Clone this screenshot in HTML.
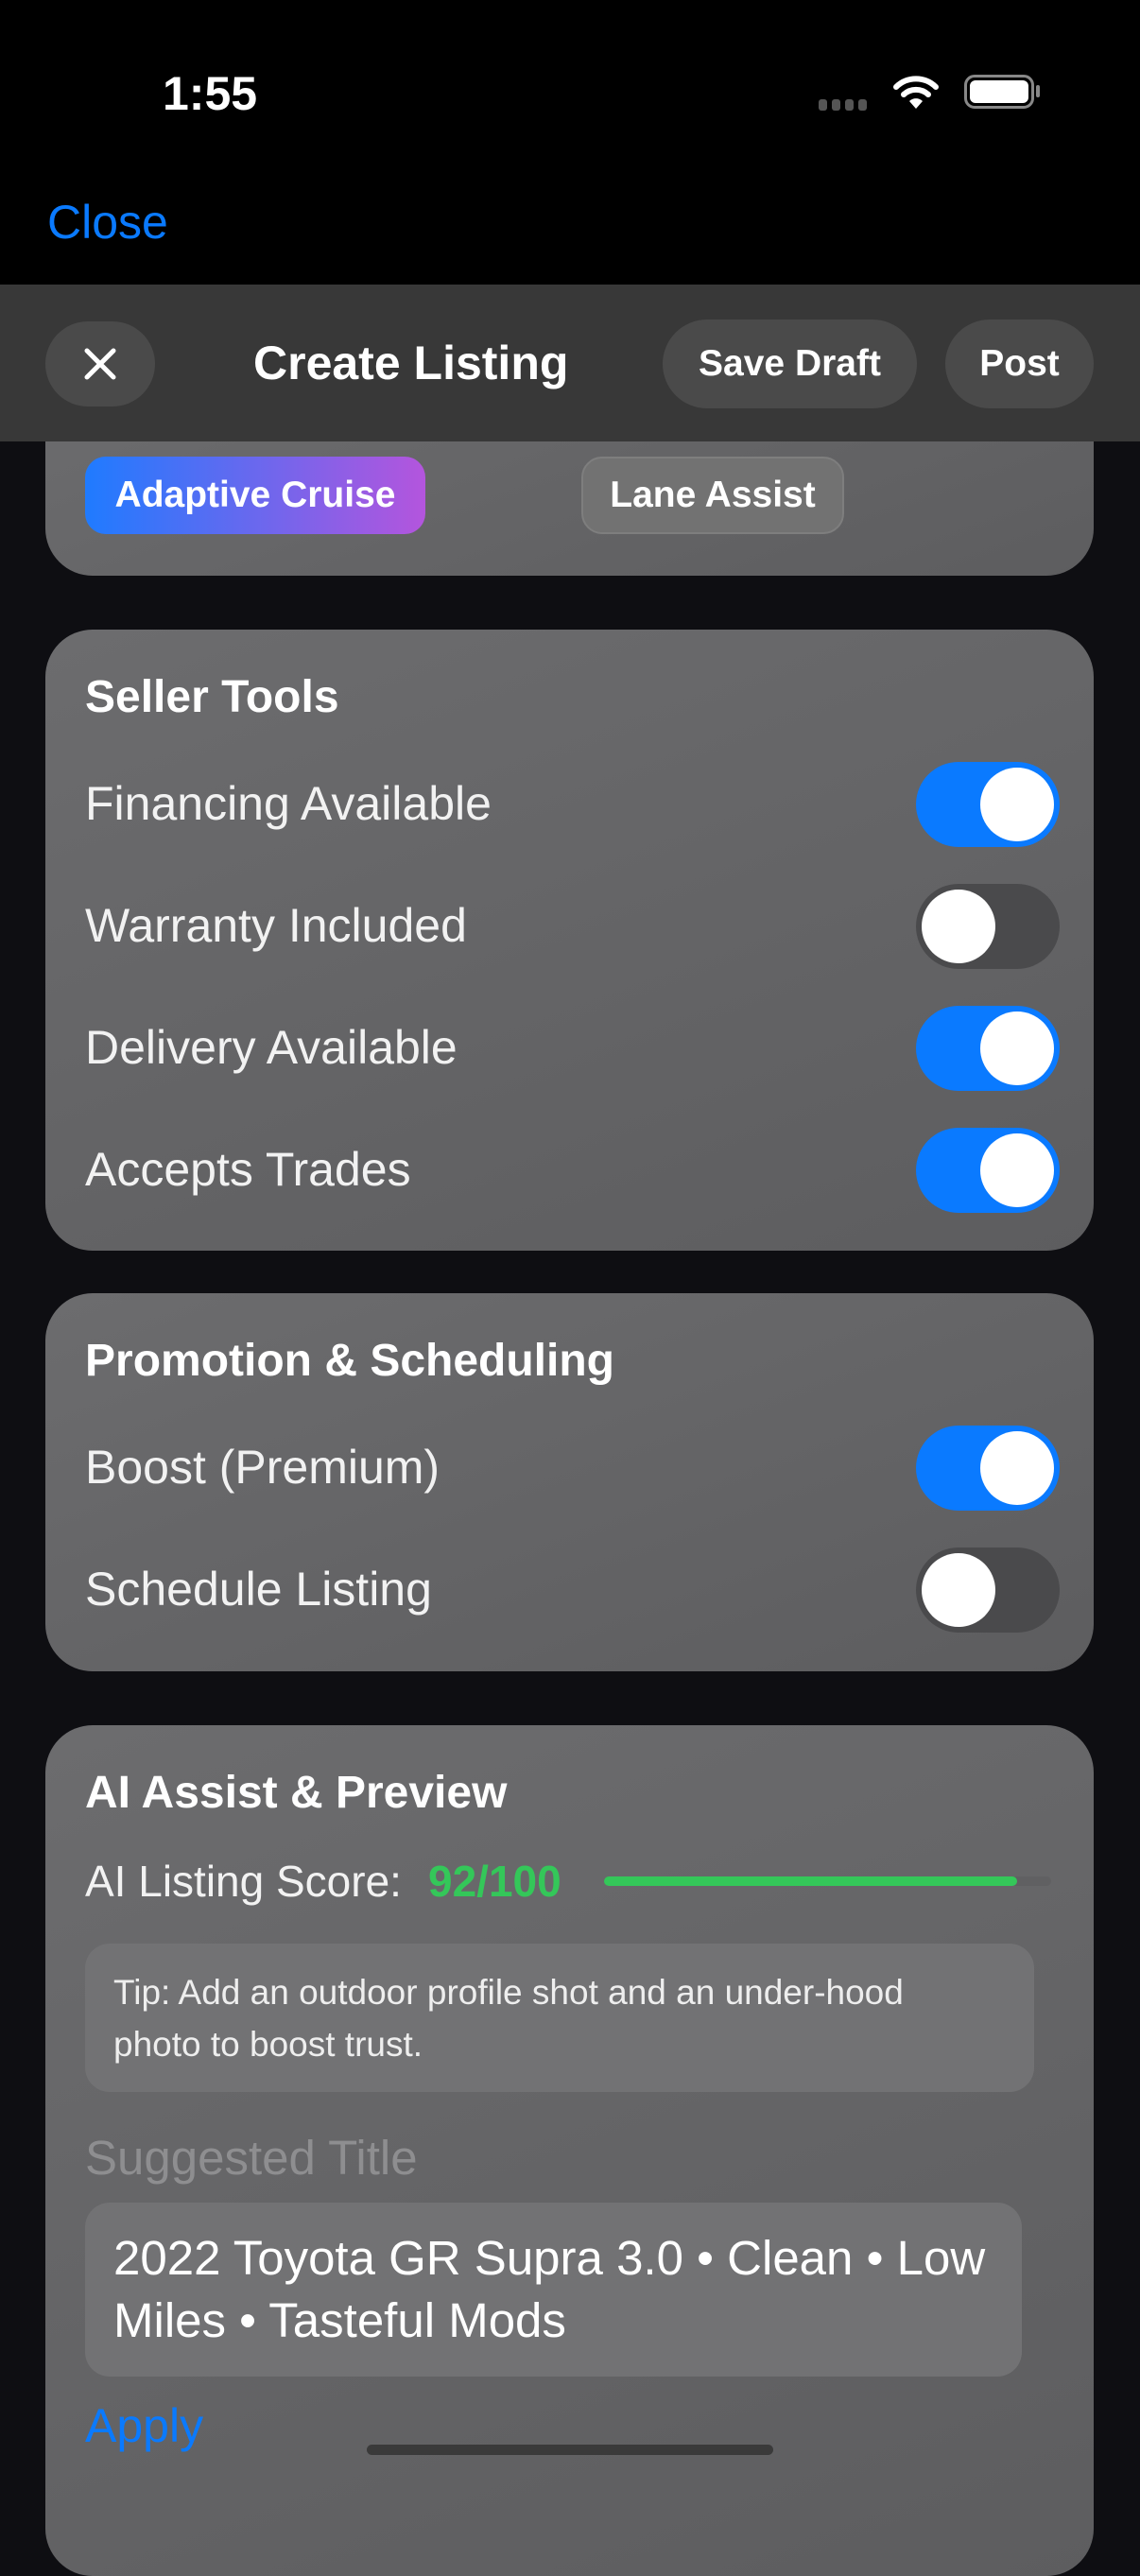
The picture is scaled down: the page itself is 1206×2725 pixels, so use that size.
<!DOCTYPE html>
<html><head><meta charset="utf-8"><style>
*{margin:0;padding:0;box-sizing:border-box}
body{width:1206px;height:2622px;background:#0e0e12;font-family:"Liberation Sans",sans-serif;color:#fff;position:relative;overflow:hidden}
.abs{position:absolute}
.top{left:0;top:0;width:1206px;height:301px;background:#000}
.nav{left:0;top:301px;width:1206px;height:166px;background:#383838;z-index:5}
.pill{position:absolute;background:#4a4a4a;border-radius:50px;display:flex;align-items:center;justify-content:center;font-size:39px;font-weight:bold}
.card{position:absolute;left:48px;width:1109px;background:linear-gradient(160deg,#6c6c6e,#5d5d5f);border-radius:50px}
.h{position:absolute;left:42px;font-size:48px;font-weight:bold}
.row{position:absolute;left:42px;font-size:50px;color:#f2f2f2}
.tg{position:absolute;right:36px;width:152px;height:90px;border-radius:45px;background:#0a7aff}
.tg::after{content:"";position:absolute;top:6px;right:6px;width:78px;height:78px;border-radius:50%;background:#fff}
.tg.off{background:#4a4a4c}
.tg.off::after{right:auto;left:6px}
</style></head><body>
<div class="abs top"></div>
<div class="abs" style="left:172px;top:70px;font-size:50px;font-weight:bold">1:55</div>
<div class="abs" style="left:866px;top:105px;display:flex;gap:5px"><i style="width:9px;height:12px;background:#555;border-radius:3px"></i><i style="width:9px;height:12px;background:#555;border-radius:3px"></i><i style="width:9px;height:12px;background:#555;border-radius:3px"></i><i style="width:9px;height:12px;background:#555;border-radius:3px"></i></div>
<svg class="abs" style="left:944px;top:78px" width="50" height="40" viewBox="0 0 50 40"><path d="M4 14a30 30 0 0 1 42 0" stroke="#fff" stroke-width="6" fill="none" stroke-linecap="round"/><path d="M12 22a19 19 0 0 1 26 0" stroke="#fff" stroke-width="6" fill="none" stroke-linecap="round"/><path d="M18 29l7 8 7-8a10 10 0 0 0-14 0z" fill="#fff"/></svg>
<div class="abs" style="left:1020px;top:79px;width:74px;height:36px;border:3px solid #888;border-radius:11px;padding:3px"><div style="width:100%;height:100%;background:#fff;border-radius:6px"></div></div>
<div class="abs" style="left:1096px;top:90px;width:4px;height:13px;background:#888;border-radius:2px"></div>
<div class="abs" style="left:50px;top:206px;font-size:50px;color:#0a7aff">Close</div>
<div class="abs nav">
<div class="pill" style="left:48px;top:39px;width:116px;height:90px"><svg width="36" height="36" viewBox="0 0 36 36"><path d="M4 4L32 32M32 4L4 32" stroke="#fff" stroke-width="5" stroke-linecap="round"/></svg></div>
<div class="abs" style="left:268px;top:54px;font-size:50px;font-weight:bold">Create Listing</div>
<div class="pill" style="left:701px;top:37px;width:269px;height:94px">Save Draft</div>
<div class="pill" style="left:1000px;top:37px;width:157px;height:94px">Post</div>
</div>
<div class="card" style="top:400px;height:209px">
<div class="abs" style="left:42px;top:83px;width:360px;height:82px;border-radius:22px;background:linear-gradient(90deg,#1f7bff,#b455dd);font-size:39px;font-weight:bold;display:flex;align-items:center;justify-content:center">Adaptive Cruise</div>
<div class="abs" style="left:567px;top:83px;width:278px;height:82px;border-radius:22px;background:#727272;border:2px solid #7e7e7e;font-size:39px;font-weight:bold;display:flex;align-items:center;justify-content:center">Lane Assist</div>
</div>
<div class="card" style="top:666px;height:657px">
<div class="h" style="top:44px">Seller Tools</div>
<div class="row" style="top:155px">Financing Available</div><div class="tg" style="top:140px"></div>
<div class="row" style="top:284px">Warranty Included</div><div class="tg off" style="top:269px"></div>
<div class="row" style="top:413px">Delivery Available</div><div class="tg" style="top:398px"></div>
<div class="row" style="top:542px">Accepts Trades</div><div class="tg" style="top:527px"></div>
</div>
<div class="card" style="top:1368px;height:400px">
<div class="h" style="top:44px">Promotion &amp; Scheduling</div>
<div class="row" style="top:155px">Boost (Premium)</div><div class="tg" style="top:140px"></div>
<div class="row" style="top:284px">Schedule Listing</div><div class="tg off" style="top:269px"></div>
</div>
<div class="card" style="top:1825px;height:900px">
<div class="h" style="top:44px">AI Assist &amp; Preview</div>
<div class="row" style="top:138px;font-size:46px">AI Listing Score:</div>
<div class="abs" style="left:405px;top:138px;font-size:46px;font-weight:bold;color:#34c759">92/100</div>
<div class="abs" style="left:591px;top:160px;width:473px;height:10px;border-radius:5px;background:#606062"><div style="width:437px;height:10px;border-radius:5px;background:#34c759"></div></div>
<div class="abs" style="left:42px;top:231px;width:1004px;height:157px;border-radius:26px;background:#727274;padding:24px 120px 24px 30px;font-size:37px;line-height:55px;color:#eee">Tip: Add an outdoor profile shot and an under-hood photo to boost trust.</div>
<div class="row" style="top:428px;color:#8e8e90;font-size:51px">Suggested Title</div>
<div class="abs" style="left:42px;top:505px;width:991px;height:184px;border-radius:26px;background:#727274;padding:26px 30px;font-size:51px;line-height:66px;color:#fff">2022 Toyota GR Supra 3.0 • Clean • Low Miles • Tasteful Mods</div>
<div class="row" style="top:712px;color:#0a7aff;font-size:50px">Apply</div>
</div>
<div class="abs" style="left:388px;top:2586px;width:430px;height:11px;border-radius:6px;background:#3a3a3a"></div>
</body></html>
